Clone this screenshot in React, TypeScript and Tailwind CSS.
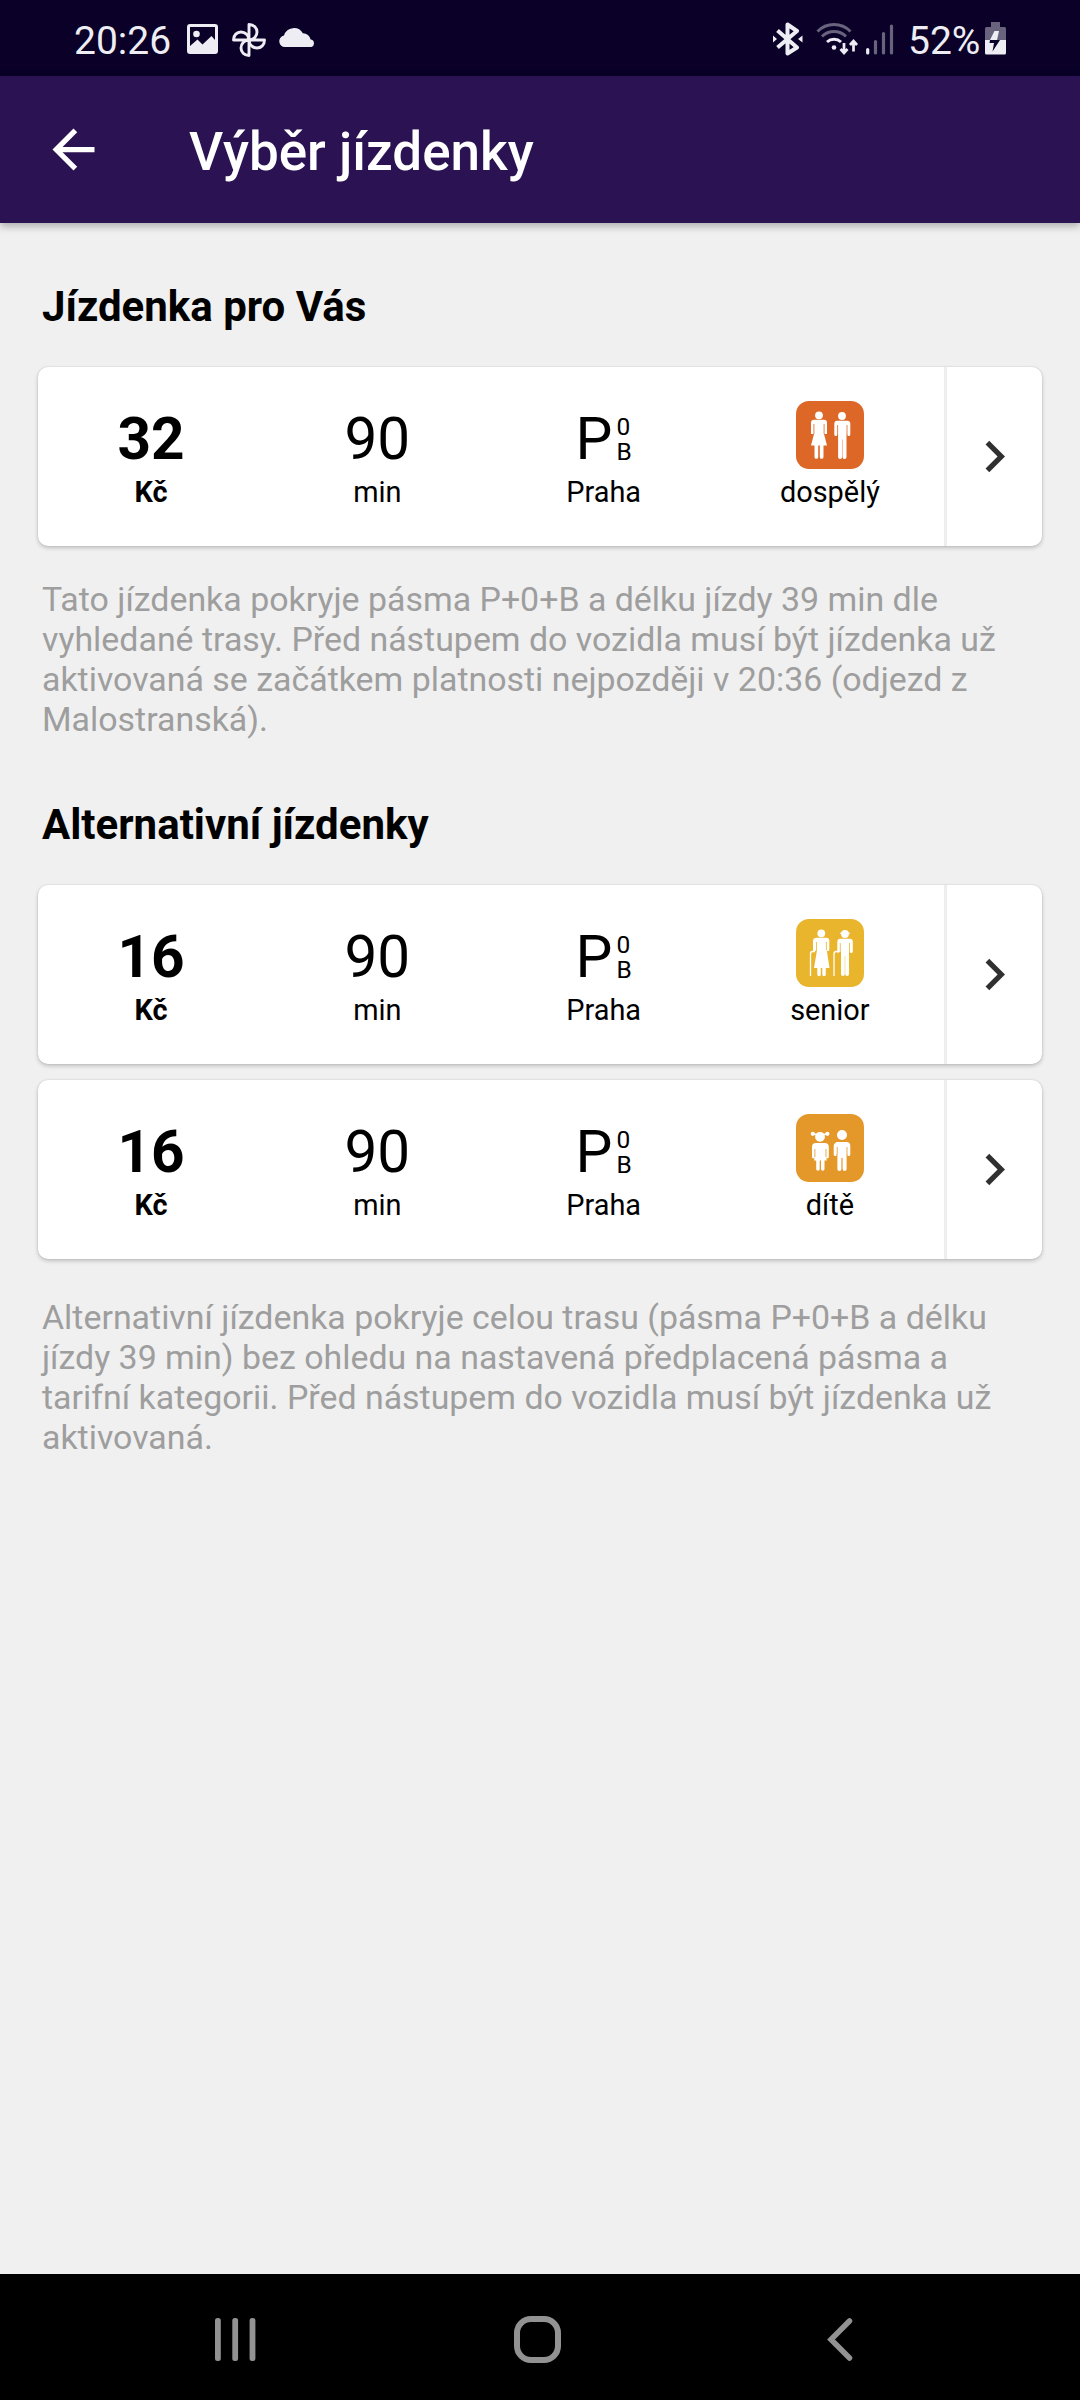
import React from 'react';

type Category = 'adult' | 'senior' | 'child';

interface Ticket {
  id: number;
  price: number;
  minutes: number;
  category: Category;
  label: string;
}

const recommended: Ticket[] = [
  { id: 1, price: 32, minutes: 90, category: 'adult', label: 'dospělý' },
];

const alternatives: Ticket[] = [
  { id: 2, price: 16, minutes: 90, category: 'senior', label: 'senior' },
  { id: 3, price: 16, minutes: 90, category: 'child', label: 'dítě' },
];

const StatusBar: React.FC = () => (
  <div className="flex h-[76px] items-center justify-between bg-[#0a0028] pl-[74px] pr-[74px] text-[39px] leading-none text-[#eeedf4]">
    <div className="flex items-center">
      <span className="mt-[6px] w-[113px]">20:26</span>
      <svg width="31" height="30" viewBox="0 0 31 30" className="mt-[2px]">
        <path
          fill="currentColor"
          fillRule="evenodd"
          d="M3 0h25a3 3 0 0 1 3 3v24a3 3 0 0 1-3 3H3a3 3 0 0 1-3-3V3a3 3 0 0 1 3-3zM3 3v19l7.500-6.500 5 5 9-8.500 3.500 4V3z"
        />
        <circle cx="9.500" cy="10" r="3.300" fill="currentColor" />
      </svg>
      <svg width="36" height="36" viewBox="-18 -18 36 36" className="ml-[13px] mt-[3px]" fill="none" stroke="currentColor" strokeWidth="2.900" strokeLinejoin="round">
        <path d="M0 0V-15.500C5-15.500 8-12 8-8C8-4 5 0 0 0" />
        <path d="M0 0H15.500C15.500 5 12 8 8 8C4 8 0 5 0 0" />
        <path d="M0 0V15.500C-5 15.500-8 12-8 8C-8 4-5 0 0 0" />
        <path d="M0 0H-15.500C-15.500-5-12-8-8-8C-4-8 0-5 0 0" />
      </svg>
      <svg width="35" height="20" viewBox="0 2 33 18" className="ml-[12px]" fill="currentColor">
        <path d="M5.500 19.500a5.500 5.500 0 0 1-.8-10.900A9.800 9.800 0 0 1 22.500 6.500a7.200 7.200 0 0 1 7.300 6 3.600 3.600 0 0 1 .7 7z" />
      </svg>
    </div>
    <div className="flex items-center">
      <svg width="30" height="34" viewBox="0 0 30 34" className="mt-[1px]">
        <path d="M4.500 8.500L24 25.500 14.500 31.500V2.500L24 9 4.500 25.500" fill="none" stroke="currentColor" strokeWidth="4" strokeLinejoin="round" />
        <path d="M0 13.500l4 3.500-4 3.500zM29.500 13.500l-4.500 3.500 4.500 3.500z" fill="currentColor" />
      </svg>
      <svg width="43" height="34" viewBox="0 0 43 34" className="ml-[13px] mt-[1px]" fill="none" stroke="currentColor" strokeWidth="3">
        <path d="M1.500 9.500a23 23 0 0 1 33 0" opacity=".42" />
        <path d="M6 14.500a17 17 0 0 1 24 0" opacity=".42" />
        <path d="M11 20a10.500 10.500 0 0 1 14 0" />
        <circle cx="18" cy="25.500" r="2.300" fill="currentColor" stroke="none" />
        <path d="M28 21v9M24.500 27l3.500 4 3.500-4M37.500 29.500V20M34 23l3.500-4 3.500 4" strokeWidth="2.700" />
      </svg>
      <svg width="28" height="31" viewBox="0 0 28 31" className="ml-[7px] mt-[2px]" stroke="currentColor" strokeWidth="3.200" strokeLinecap="round">
        <path d="M1.700 25.500v3.500" />
        <path d="M9.500 17.500v11.500M17.500 9.500v19.500M25.500 2v27" opacity=".42" />
      </svg>
      <span className="ml-[14px] mt-[6px] w-[77px]">52%</span>
      <svg width="21" height="33" viewBox="0 0 21 33">
        <path d="M6 0h9v5h4.500a1.500 1.500 0 0 1 1.500 1.500V18H0V6.500A1.500 1.500 0 0 1 1.500 5H6z" fill="currentColor" opacity=".42" />
        <path d="M0 18h21v13a1.500 1.500 0 0 1-1.500 1.500h-18A1.500 1.500 0 0 1 0 31z" fill="currentColor" />
        <path d="M9.500 9h4.500l-2 9H5z" fill="currentColor" />
        <path d="M5 18h10L7.500 29.500l1.500-8.500H4.500z" fill="#0a0028" />
      </svg>
    </div>
  </div>
);

const AdultFigures: React.FC = () => (
  <>
    <circle cx="23" cy="14.300" r="3.900" />
    <path d="M18 18.800h10a3 3 0 0 1 3 3V33h-3l3 11.500H15L18 33h-3V21.800a3 3 0 0 1 3-3z" />
    <path d="M18.500 43h3.700v13a1.850 1.850 0 0 1-3.700 0zM23.800 43h3.700v13a1.850 1.850 0 0 1-3.700 0z" />
    <path d="M17.900 23v10M28.100 23v10" stroke="#dd6727" strokeWidth=".8" />
    <circle cx="46" cy="15" r="3.900" />
    <path d="M41.300 19.800h10a3 3 0 0 1 3 3v10.700a1.500 1.500 0 0 1-3 0h-.8V56a2 2 0 0 1-4 0V38.500h-.4V56a2 2 0 0 1-4 0V33.500h-.8a1.500 1.500 0 0 1-3 0V22.800a3 3 0 0 1 3-3z" />
    <path d="M41.600 24v10M51 24v10" stroke="#dd6727" strokeWidth=".8" />
  </>
);

const SeniorFigures: React.FC = () => (
  <>
    <circle cx="25.300" cy="14.300" r="3.900" />
    <path d="M20.500 18.800h9.800a3 3 0 0 1 3 3v9a1.300 1.300 0 0 1-2.600 0L33.500 49H18l3-18-4 2v-11a3.500 3.500 0 0 1 3.500-3.200z" />
    <path d="M21.300 48h3.500v7.500a1.750 1.750 0 0 1-3.500 0zM26.300 48h3.500v7.500a1.750 1.750 0 0 1-3.500 0z" />
    <path d="M20.500 23v8.500M30.400 23v8" stroke="#e9b52d" strokeWidth=".8" />
    <path d="M19 32.500h-2.500q-2 0-2 2.500v22M42.500 32.500H40q-2 0-2 2.500v22" fill="none" stroke="#fff" strokeWidth="1.300" />
    <circle cx="49" cy="15" r="3.900" />
    <path d="M44 14.800v-1h1.200a4 3.500 0 0 1 7.600 0H54v1z" />
    <path d="M44.300 19.800h9.500a3 3 0 0 1 3 3v9.700a1.500 1.500 0 0 1-3 0h-.8V55a1.900 1.900 0 0 1-3.800 0V37h-.4v18a1.900 1.900 0 0 1-3.800 0V33h-1l-2.700 1V22.800a3 3 0 0 1 3-3z" />
    <path d="M44.300 24v9M53.500 24v9" stroke="#e9b52d" strokeWidth=".8" />
  </>
);

const ChildFigures: React.FC = () => (
  <>
    <circle cx="24" cy="22.800" r="4.900" />
    <circle cx="16.800" cy="19.800" r="2.100" />
    <circle cx="31.400" cy="19.800" r="2.100" />
    <path d="M16.800 19.800l4 1M31.400 19.800l-4 1" stroke="#fff" strokeWidth="1.500" />
    <path d="M19.800 29h9a4 4 0 0 1 4 4v10a1.400 1.400 0 0 1-2.800 0l.8 3.500H18l.8-3.500a1.400 1.400 0 0 1-2.800 0V33a4 4 0 0 1 3.800-4z" />
    <path d="M20.200 45h3.500v10a1.750 1.750 0 0 1-3.500 0zM25 45h3.500v10a1.750 1.750 0 0 1-3.500 0z" />
    <path d="M18.900 35v8M30 35v8" stroke="#e49829" strokeWidth=".8" />
    <circle cx="46" cy="21" r="5" />
    <path d="M41.800 28h8.500a4 4 0 0 1 4 4v8.500a1.500 1.500 0 0 1-3 0h-.7V55a2 2 0 0 1-4 0V44h-1.200v11a2 2 0 0 1-4 0V40.500h-.7a1.500 1.500 0 0 1-3 0V32a4 4 0 0 1 4.100-4z" />
    <path d="M41.200 33v8M51 33v8" stroke="#e49829" strokeWidth=".8" />
  </>
);

const CategoryIcon: React.FC<{ category: Category }> = ({ category }) => {
  const colors: Record<Category, string> = {
    adult: '#dd6727',
    senior: '#e9b52d',
    child: '#e49829',
  };

  return (
    <svg width="68" height="68" viewBox="0 0 68 68" fill="#fff">
      <rect width="68" height="68" rx="13" fill={colors[category]} />
      {category === 'adult' && <AdultFigures />}
      {category === 'senior' && <SeniorFigures />}
      {category === 'child' && <ChildFigures />}
    </svg>
  );
};

const TicketCard: React.FC<{ ticket: Ticket }> = ({ ticket }) => (
  <div className="flex h-[179px] rounded-[10px] bg-white text-[28.9px] leading-[34px] shadow-[0_2px_4px_rgba(0,0,0,0.2),0_0_2px_rgba(0,0,0,0.12)]">
    <div className="grid w-[906px] grid-cols-4 pr-[1px] pt-[34px] text-center">
      <div className="font-bold">
        <div className="h-[74px] pt-[4px] text-[58.5px] leading-[68px]">{ticket.price}</div>
        <div>Kč</div>
      </div>
      <div>
        <div className="h-[74px] pt-[4px] text-[58.5px] leading-[68px]">{ticket.minutes}</div>
        <div>min</div>
      </div>
      <div>
        <div className="flex h-[74px] justify-center pt-[4px]">
          <span className="text-[58.5px] leading-[68px]">P</span>
          <span className="ml-[4px] mt-[10px] text-left text-[24.5px] leading-[24.5px]">
            0<br />B
          </span>
        </div>
        <div>Praha</div>
      </div>
      <div>
        <div className="flex h-[74px] justify-center">
          <CategoryIcon category={ticket.category} />
        </div>
        <div>{ticket.label}</div>
      </div>
    </div>
    <button className="flex flex-1 items-center justify-center border-l-[3px] border-[#eee]">
      <svg width="63" height="63" viewBox="0 0 24 24" fill="#303030">
        <path d="M10 6L8.590 7.410 13.170 12l-4.580 4.590L10 18l6-6z" />
      </svg>
    </button>
  </div>
);

const NavigationBar: React.FC = () => (
  <div className="flex h-[126px] items-center bg-black pl-[215px] pt-[5px] text-[#929292]">
    <svg width="41" height="43" viewBox="0 0 41 43" fill="currentColor">
      <rect width="5.800" height="43" rx="2.500" />
      <rect x="17.300" width="5.800" height="43" rx="2.500" />
      <rect x="34.600" width="5.800" height="43" rx="2.500" />
    </svg>
    <svg width="47" height="47" viewBox="0 0 47 47" className="ml-[258px]" fill="none" stroke="currentColor" strokeWidth="6">
      <rect x="3" y="3" width="41" height="41" rx="14" />
    </svg>
    <svg width="26" height="43" viewBox="0 0 26 43" className="ml-[266px]" fill="none" stroke="currentColor" strokeWidth="5.500" strokeLinecap="round">
      <path d="M22.500 3L4 21.500l18.500 18.500" />
    </svg>
  </div>
);

const App: React.FC = () => {
  return (
    <div className="flex h-[2400px] w-[1080px] flex-col bg-[#f0f0f0] font-['Roboto',sans-serif] text-black">
      <StatusBar />
      <header className="flex h-[147px] items-center bg-[#2b1253] pl-[42px] text-white shadow-[0_3px_8px_rgba(0,0,0,0.3)]">
        <svg width="63" height="63" viewBox="0 0 24 24" fill="currentColor">
          <path d="M20 11H7.830l5.590-5.590L12 4l-8 8 8 8 1.410-1.410L7.830 13H20v-2z" />
        </svg>
        <h1 className="ml-[84px] mt-[4px] text-[53px] font-medium leading-[62px]">Výběr jízdenky</h1>
      </header>
      <main className="flex-1 px-[38px] pt-[59px]">
        <h2 className="ml-[4px] text-[42px] font-bold leading-[50px]">Jízdenka pro Vás</h2>
        <div className="mt-[35px] flex flex-col gap-[16px]">
          {recommended.map(ticket => (
            <TicketCard key={ticket.id} ticket={ticket} />
          ))}
        </div>
        <p className="ml-[4px] mt-[34px] text-[33.9px] leading-[40px] text-[#9e9e9e]">
          Tato jízdenka pokryje pásma P+0+B a délku jízdy 39 min dle<br />
          vyhledané trasy. Před nástupem do vozidla musí být jízdenka už<br />
          aktivovaná se začátkem platnosti nejpozději v 20:36 (odjezd z<br />
          Malostranská).
        </p>
        <h2 className="ml-[4px] mt-[60px] text-[42px] font-bold leading-[50px]">Alternativní jízdenky</h2>
        <div className="mt-[35px] flex flex-col gap-[16px]">
          {alternatives.map(ticket => (
            <TicketCard key={ticket.id} ticket={ticket} />
          ))}
        </div>
        <p className="ml-[4px] mt-[39px] text-[33.9px] leading-[40px] text-[#9e9e9e]">
          Alternativní jízdenka pokryje celou trasu (pásma P+0+B a délku<br />
          jízdy 39 min) bez ohledu na nastavená předplacená pásma a<br />
          tarifní kategorii. Před nástupem do vozidla musí být jízdenka už<br />
          aktivovaná.
        </p>
      </main>
      <NavigationBar />
    </div>
  );
};

export default App;
